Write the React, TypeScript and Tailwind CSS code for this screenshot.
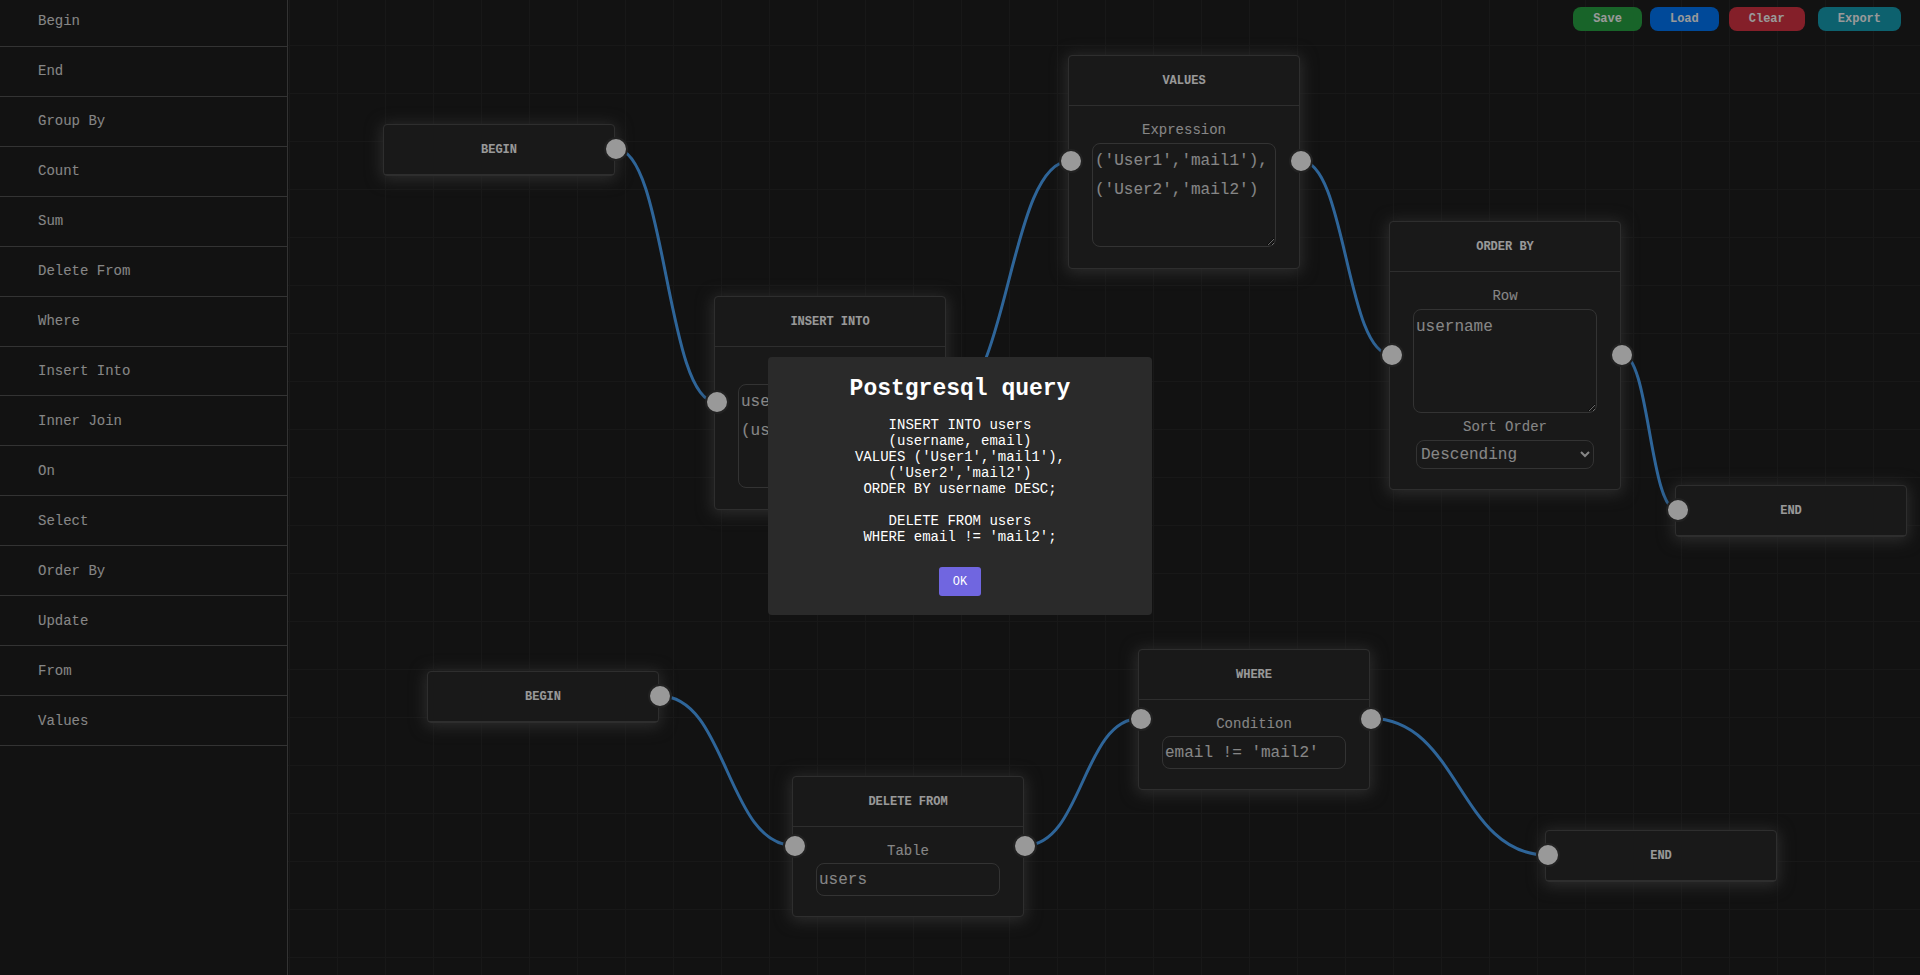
import React, { useState } from "react";

type Field =
  | { kind: "input"; label: string; value: string }
  | { kind: "textarea"; label: string; value: string }
  | { kind: "select"; label: string; value: string; options: string[] };

interface FlowNode {
  id: string;
  title: string;
  x: number;
  y: number;
  height: number;
  hasInput: boolean;
  hasOutput: boolean;
  fields: Field[];
}

const NODE_WIDTH = 232;

const palette = [
  "Begin",
  "End",
  "Group By",
  "Count",
  "Sum",
  "Delete From",
  "Where",
  "Insert Into",
  "Inner Join",
  "On",
  "Select",
  "Order By",
  "Update",
  "From",
  "Values",
];

const nodes: FlowNode[] = [
  { id: "begin-1", title: "BEGIN", x: 95, y: 124, height: 52, hasInput: false, hasOutput: true, fields: [] },
  {
    id: "insert",
    title: "INSERT INTO",
    x: 426,
    y: 296,
    height: 214,
    hasInput: true,
    hasOutput: true,
    fields: [{ kind: "textarea", label: "Table", value: "users\n(username, email)" }],
  },
  {
    id: "values",
    title: "VALUES",
    x: 780,
    y: 55,
    height: 214,
    hasInput: true,
    hasOutput: true,
    fields: [{ kind: "textarea", label: "Expression", value: "('User1','mail1'),\n('User2','mail2')" }],
  },
  {
    id: "order",
    title: "ORDER BY",
    x: 1101,
    y: 221,
    height: 269,
    hasInput: true,
    hasOutput: true,
    fields: [
      { kind: "textarea", label: "Row", value: "username" },
      { kind: "select", label: "Sort Order", value: "Descending", options: ["Ascending", "Descending"] },
    ],
  },
  { id: "end-1", title: "END", x: 1387, y: 485, height: 52, hasInput: true, hasOutput: false, fields: [] },
  { id: "begin-2", title: "BEGIN", x: 139, y: 671, height: 52, hasInput: false, hasOutput: true, fields: [] },
  {
    id: "delete",
    title: "DELETE FROM",
    x: 504,
    y: 776,
    height: 141,
    hasInput: true,
    hasOutput: true,
    fields: [{ kind: "input", label: "Table", value: "users" }],
  },
  {
    id: "where",
    title: "WHERE",
    x: 850,
    y: 649,
    height: 141,
    hasInput: true,
    hasOutput: true,
    fields: [{ kind: "input", label: "Condition", value: "email != 'mail2'" }],
  },
  { id: "end-2", title: "END", x: 1257, y: 830, height: 52, hasInput: true, hasOutput: false, fields: [] },
];

const links: [string, string][] = [
  ["begin-1", "insert"],
  ["insert", "values"],
  ["values", "order"],
  ["order", "end-1"],
  ["begin-2", "delete"],
  ["delete", "where"],
  ["where", "end-2"],
];

const query = `INSERT INTO users
(username, email)
VALUES ('User1','mail1'),
('User2','mail2')
ORDER BY username DESC;

DELETE FROM users
WHERE email != 'mail2';`;

function linkPath(fromId: string, toId: string) {
  const from = nodes.find((n) => n.id === fromId)!;
  const to = nodes.find((n) => n.id === toId)!;
  const x1 = from.x + NODE_WIDTH + 1;
  const y1 = from.y + from.height / 2 - 1;
  const x2 = to.x + 2;
  const y2 = to.y + to.height / 2 - 1;
  const bend = Math.abs(x2 - x1) / 2;
  return `M ${x1} ${y1} C ${x1 + bend} ${y1} ${x2 - bend} ${y2} ${x2} ${y2}`;
}

function Port({ side }: { side: "left" | "right" }) {
  return (
    <span
      className={
        "absolute top-1/2 size-6 -translate-y-[13px] rounded-full border-2 border-[#383838] bg-white " +
        (side === "left" ? "-left-[10px]" : "-right-[14px]")
      }
    />
  );
}

function FieldControl({ id, field }: { id: string; field: Field }) {
  return (
    <>
      <label htmlFor={id} className="h-6 text-sm leading-6 text-[#e0e0e0]">
        {field.label}
      </label>
      {field.kind === "input" && (
        <input
          id={id}
          defaultValue={field.value}
          className="mb-px h-[33px] w-[184px] rounded-lg border border-[#555] bg-transparent px-0.5 text-base text-[#e0e0e0]"
        />
      )}
      {field.kind === "textarea" && (
        <textarea
          id={id}
          defaultValue={field.value}
          spellCheck={false}
          className="mt-px mb-0.5 h-[104px] w-[184px] resize rounded-lg border border-[#555] bg-transparent px-0.5 pt-[3px] text-base leading-[29px] text-[#e0e0e0]"
        />
      )}
      {field.kind === "select" && (
        <select
          id={id}
          defaultValue={field.value}
          className="my-px h-[29px] w-[178px] rounded-lg border border-[#555] bg-[#2b2b2b] text-base text-[#e0e0e0]"
        >
          {field.options.map((o) => (
            <option key={o}>{o}</option>
          ))}
        </select>
      )}
    </>
  );
}

function NodeCard({ node }: { node: FlowNode }) {
  return (
    <section
      className="absolute w-[232px] rounded-sm border border-[#4e4e4e] bg-[#2b2b2b] shadow-[0_2px_15px_2px_#4a4a4a]"
      style={{ left: node.x, top: node.y }}
    >
      <h3 className="flex h-[50px] items-center justify-center border-b border-[#4e4e4e] text-xs font-bold text-white">
        {node.title}
      </h3>
      {node.fields.length > 0 && (
        <div className="flex flex-col items-center pt-3 pb-[19px]">
          {node.fields.map((field, i) => (
            <FieldControl key={field.label} id={`${node.id}-${i}`} field={field} />
          ))}
        </div>
      )}
      {node.hasInput && <Port side="left" />}
      {node.hasOutput && <Port side="right" />}
    </section>
  );
}

export default function App() {
  const [open, setOpen] = useState(true);

  return (
    <div className="flex h-screen overflow-hidden bg-[#1e1e1e] font-['Liberation_Mono',monospace] text-[#e0e0e0]">
      <aside className="w-72 shrink-0 overflow-hidden border-r border-[#555]">
        <ul className="-mt-[3px] grid h-[749px] auto-rows-fr">
          {palette.map((name) => (
            <li key={name} className="flex items-center border-b border-[#555] pl-[38px] text-sm">
              {name}
            </li>
          ))}
        </ul>
      </aside>

      <main className="relative min-w-0 flex-1 overflow-hidden bg-[linear-gradient(to_right,#292929_1px,transparent_1px),linear-gradient(to_bottom,#292929_1px,transparent_1px)] bg-[size:48px_48px] bg-[position:1px_45px]">
        <svg className="absolute inset-0 size-full" aria-hidden="true">
          {links.map(([a, b]) => (
            <path key={a} d={linkPath(a, b)} fill="none" stroke="#4ea9ff" strokeWidth="3" />
          ))}
        </svg>
        {nodes.map((node) => (
          <NodeCard key={node.id} node={node} />
        ))}
        <div className="absolute top-[7px] right-[19px] flex text-xs font-bold text-white">
          <button className="mr-2 h-6 rounded-lg bg-[#28a745] px-5">Save</button>
          <button className="mr-[10px] h-6 rounded-lg bg-[#007bff] px-5">Load</button>
          <button className="mr-[13px] h-6 rounded-lg bg-[#dc3545] px-5">Clear</button>
          <button className="h-6 rounded-lg bg-[#17a2b8] px-5">Export</button>
        </div>
      </main>

      {open && (
        <div className="fixed inset-0 flex items-center justify-center bg-black/40 pb-[3px]">
          <div
            role="dialog"
            aria-labelledby="query-title"
            className="flex w-96 flex-col items-center rounded bg-[#2a2a2a] pt-4 pb-[19px] text-white"
          >
            <h2 id="query-title" className="text-[23px] leading-8 font-bold">
              Postgresql query
            </h2>
            <pre className="mt-3 text-center font-['Liberation_Mono',monospace] text-sm leading-4">{query}</pre>
            <button
              onClick={() => setOpen(false)}
              className="mt-[22px] h-[29px] rounded-[3px] bg-[#7066e0] px-3.5 text-xs"
            >
              OK
            </button>
          </div>
        </div>
      )}
    </div>
  );
}
